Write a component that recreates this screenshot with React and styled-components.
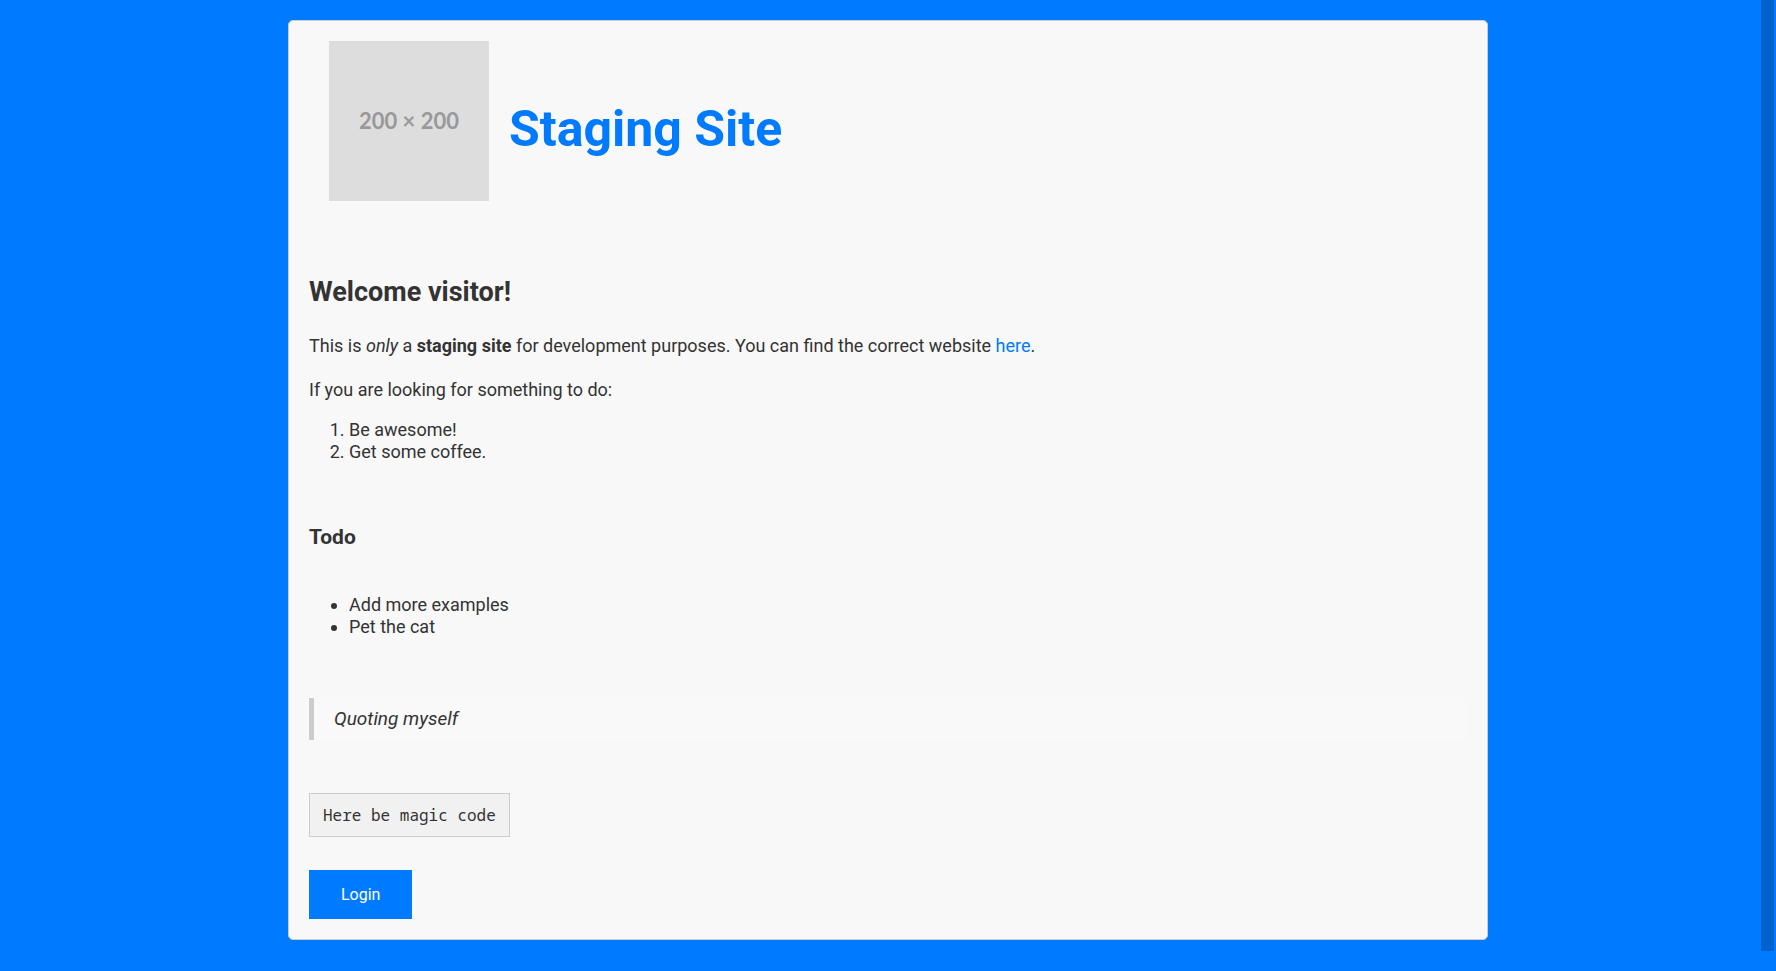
import React from "react";
import styled, { createGlobalStyle, css } from "styled-components";

const GlobalStyle = createGlobalStyle`
  html { background: #007bff; }
  body { margin: 0; background: #007bff; color: #333; font: 18px/22px Roboto, sans-serif; }
`;
const Page = styled.div`
  display: flex;
  padding: 0 2px 0 15px;
`;
const Content = styled.main`
  box-sizing: border-box;
  width: 100%;
  max-width: 1200px;
  margin: 20px auto;
  padding: 20px;
  background: #f8f8f8;
  border: 1px solid #ccc;
  border-radius: 5px;
`;
const ScrollTrack = styled.div`
  width: 13px;
  flex: none;
  margin-bottom: 9px;
  background: #0062cc;
`;
const Header = styled.header`
  display: flex;
  align-items: center;
  gap: 20px;
  padding-left: 20px;
  margin-bottom: 73px;
`;
const Placeholder = styled.div`
  display: flex;
  align-items: center;
  justify-content: center;
  width: 160px;
  height: 160px;
  background: #ddd;
  color: #999;
  font: bold 22px/26px Lato, sans-serif;
`;
const Title = styled.h1`
  margin: 16px 0 0;
  color: #007bff;
  font-size: 50px;
  line-height: 60px;
`;
const Heading = styled.h2`
  margin: 0 0 25px;
  font-size: 27px;
  line-height: 36px;
`;
const Subheading = styled.h3`
  margin: 60px 0 43px;
  font-size: 21px;
  line-height: 28px;
`;
const Text = styled.p`
  margin: 22px 0 18px;
`;
const Link = styled.a`
  color: #007bff;
  text-decoration: none;
`;
const listStyle = css`
  margin: 0;
  padding-left: 40px;
`;
const OrderedList = styled.ol`${listStyle}`;
const BulletList = styled.ul`${listStyle}`;
const Quote = styled.blockquote`
  margin: 60px 0 53px;
  padding: 10px 20px;
  background: #f9f9f9;
  border-left: 5px solid #ccc;
  font-size: 19px;
  font-style: italic;
`;
const Code = styled.pre`
  width: max-content;
  margin: 0 0 33px;
  padding: 10px 13px;
  background: #f1f1f1;
  border: 1px solid #ccc;
  font: 16px/22px "Noto Sans Mono", "DejaVu Sans Mono", monospace;
`;
const Button = styled.button`
  display: block;
  padding: 15px 32px;
  border: 0;
  background: #007bff;
  color: #fff;
  font: 16px/19px Roboto, sans-serif;
`;

export default function App() {
  return (
    <Page>
      <GlobalStyle />
      <Content>
        <Header>
          <Placeholder>200 × 200</Placeholder>
          <Title>Staging Site</Title>
        </Header>
        <Heading>Welcome visitor!</Heading>
        <Text>
          This is <em>only</em> a <b>staging site</b> for development purposes. You can find the correct website <Link href="#">here</Link>.
        </Text>
        <Text>If you are looking for something to do:</Text>
        <OrderedList>
          <li>Be awesome!</li>
          <li>Get some coffee.</li>
        </OrderedList>
        <Subheading>Todo</Subheading>
        <BulletList>
          <li>Add more examples</li>
          <li>Pet the cat</li>
        </BulletList>
        <Quote>Quoting myself</Quote>
        <Code>Here be magic code</Code>
        <Button type="button">Login</Button>
      </Content>
      <ScrollTrack />
    </Page>
  );
}
